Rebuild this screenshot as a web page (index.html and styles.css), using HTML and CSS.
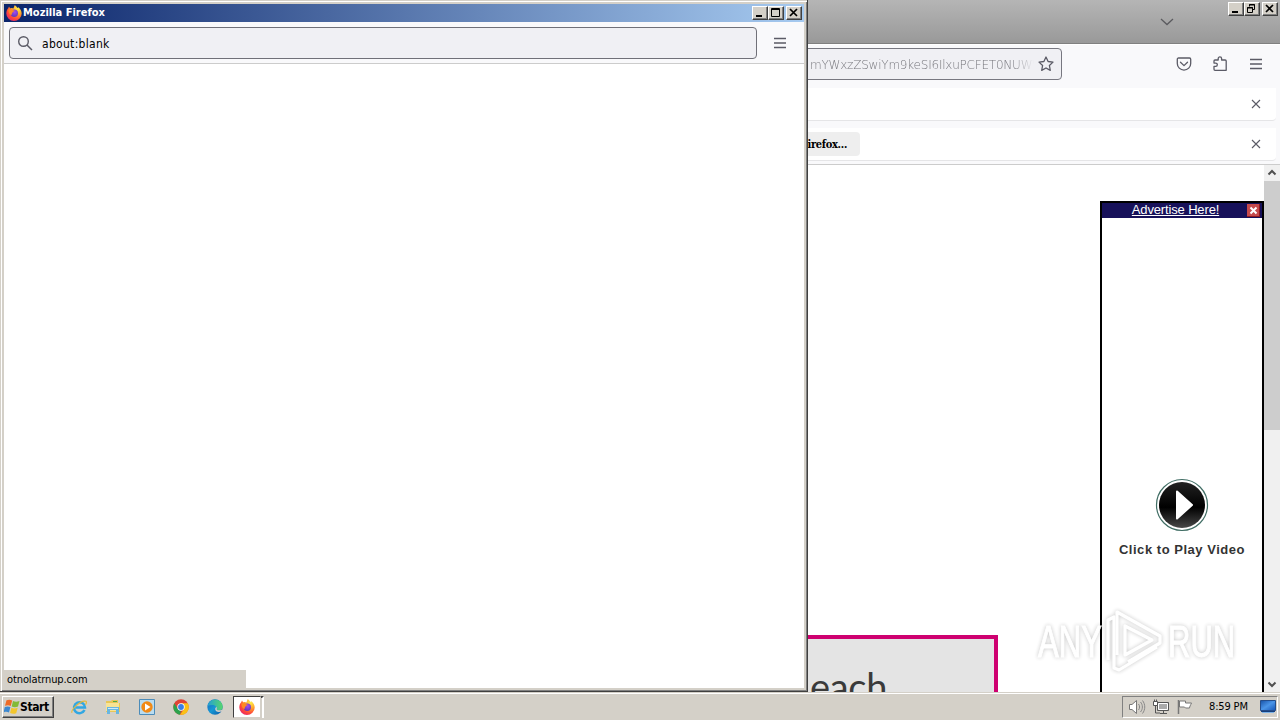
FILE: index.html
```html
<!DOCTYPE html>
<html lang="en">
<head>
<meta charset="utf-8">
<title>Desktop</title>
<link rel="stylesheet" href="styles.css">
</head>
<body>
<svg width="0" height="0" class="defs">
  <defs>
    <radialGradient id="fxo" cx=".75" cy=".2" r=".95"><stop offset="0" stop-color="#fff04a"/><stop offset=".4" stop-color="#ffa22a"/><stop offset=".72" stop-color="#ff4a38"/><stop offset="1" stop-color="#e52070"/></radialGradient>
    <radialGradient id="fxp" cx=".55" cy=".35" r=".7"><stop offset="0" stop-color="#a24cf0"/><stop offset="1" stop-color="#5b35b5"/></radialGradient>
    <linearGradient id="edge" x1="0" y1="0" x2="1" y2="1"><stop offset="0" stop-color="#1b62bd"/><stop offset=".5" stop-color="#1697d4"/><stop offset="1" stop-color="#0d58a6"/></linearGradient>
    <linearGradient id="edgeg"><stop offset="0" stop-color="#239fd6"/><stop offset="1" stop-color="#58d66b"/></linearGradient>
    <linearGradient id="ball" x1="0" y1="0" x2="0" y2="1"><stop offset="0" stop-color="#222"/><stop offset=".55" stop-color="#000"/><stop offset="1" stop-color="#494949"/></linearGradient>
    <linearGradient id="scr" x1="0" y1="0" x2="1" y2="1"><stop offset="0" stop-color="#1651a8"/><stop offset=".5" stop-color="#4b95e8"/><stop offset="1" stop-color="#1554b5"/></linearGradient>
    <symbol id="firefox" viewBox="0 0 16 16">
      <path fill="url(#fxo)" d="M2.2 3.2 3 1.6l1.1 1.7L5.8 3l1.6.5L8.6.2c1.6.7 2.2 1.8 2.7 2.8l1-.8c2 1.5 3.4 3.7 3.4 6.3A7.7 7.4 0 0 1 .3 8.5C.3 6.400 1 4.500 2.200 3.200z"/>
      <circle cx="8.300" cy="8.300" r="3.700" fill="url(#fxp)"/>
      <path fill="#ff8a22" d="M2.500 4.700C4 3.600 5.700 4 6.900 5.200l1.800.2c-.2.9-1.300 1.200-1.900 1.500-.3 1.300-1.600 1.800-1 3C3.500 9.700 2.500 7 2.500 4.700z"/>
    </symbol>
    <symbol id="menu" viewBox="0 0 16 16"><path d="M2 3.500h12M2 8h12M2 12.500h12" fill="none" stroke="#5b5b66" stroke-width="1.300"/></symbol>
    <symbol id="cross" viewBox="0 0 10 10"><path d="m1 1 8 8M9 1 1 9" fill="none" stroke="#5b5b66" stroke-width="1.100"/></symbol>
    <symbol id="min" viewBox="0 0 14 12"><path fill="#000" d="M3 8h6v2H3z"/></symbol>
    <symbol id="max" viewBox="0 0 14 12"><path fill="none" stroke="#000" d="M2.500 1.500h8v8h-8zM2 2.500h9"/></symbol>
    <symbol id="rest" viewBox="0 0 14 12"><path fill="none" stroke="#000" d="M4.500 3.500v-2h5v5h-2M4 2h6M2.500 4.500h5v5h-5zM2 5h6"/></symbol>
    <symbol id="shut" viewBox="0 0 14 12"><path fill="none" stroke="#000" stroke-width="1.700" d="m3 2 7 7m0-7-7 7"/></symbol>
  </defs>
</svg>
<div class="desktop">
  <main class="browser">
    <header class="tabstrip">
      <svg class="tabs-arrow" viewBox="0 0 14 8"><path d="m1 1 6 5.500L13 1" fill="none" stroke="#5b5b5f" stroke-width="1.300"/></svg>
      <div class="controls"><b><svg><use href="#min"/></svg></b><b><svg><use href="#rest"/></svg></b><b class="last"><svg><use href="#shut"/></svg></b></div>
    </header>
    <div class="toolbar">
      <div class="address"><span class="long-url">mYWxzZSwiYm9keSI6IlxuPCFET0NUWV</span>
        <svg class="star" viewBox="0 0 16 16"><path d="m8 1 2.100 4.500 4.900.6-3.600 3.400.9 4.900L8 12l-4.300 2.400.9-4.900L1 6.100l4.900-.6z" fill="none" stroke="#5b5b66" stroke-width="1.300" stroke-linejoin="round"/></svg>
      </div>
      <div class="tools">
        <svg viewBox="0 0 16 16"><path d="M2.500 2h11c.7 0 1.200.5 1.200 1.200v4.200a6.700 6.700 0 0 1-13.400 0V3.200C1.300 2.500 1.800 2 2.500 2zM4.500 6.300 8 9.600l3.500-3.300" fill="none" stroke="#5b5b66" stroke-width="1.300" stroke-linecap="round" stroke-linejoin="round"/></svg>
        <svg viewBox="0 0 16 16"><path d="M6.200 4V2.600a1.700 1.700 0 0 1 3.400 0V4h3.600c.6 0 1 .4 1 1v9.300H3c-.6 0-1-.4-1-1v-3h1.700a1.600 1.600 0 0 0 0-3.200H2V5c0-.6.400-1 1-1z" fill="none" stroke="#5b5b66" stroke-width="1.300" stroke-linejoin="round"/></svg>
        <svg><use href="#menu"/></svg>
      </div>
    </div>
    <div class="notices">
      <div class="notice"><svg><use href="#cross"/></svg></div>
      <div class="notice"><span class="refresh">irefox…</span><svg><use href="#cross"/></svg></div>
    </div>
    <div class="viewport">
      <div class="page">
        <section class="promo"><span>each</span></section>
        <aside class="ad">
          <div class="ad-head"><span class="ad-link">Advertise Here!</span>
            <svg class="ad-close" viewBox="0 0 13 13"><path fill="#c64a4c" d="M0 0h13v13H0z"/><path fill="#8f181f" d="M0 12h13v1H0zM12 0h1v13h-1z"/><path d="m3.500 3.500 6 6m0-6-6 6" stroke="#fff" stroke-width="2"/></svg>
          </div>
          <div class="ad-body">
            <svg class="play" viewBox="0 0 54 54"><circle cx="27" cy="27" r="25.500" fill="#fff" stroke="#416e65" stroke-width="1.200"/><circle cx="27" cy="27" r="23" fill="url(#ball)"/><path d="M22 13.500 37 27 22 40.500z" fill="#fff" stroke="#fff" stroke-width="2" stroke-linejoin="round"/></svg>
            <div class="ad-text">Click to Play Video</div>
          </div>
        </aside>
      </div>
      <div class="scrollbar">
        <svg viewBox="0 0 16 16"><path d="m4.500 9.500 3.500-3.500 3.500 3.500" fill="none" stroke="#505050" stroke-width="2"/></svg>
        <div class="thumb"></div>
        <svg class="down" viewBox="0 0 16 16"><path d="m4.500 6.500 3.500 3.500 3.500-3.500" fill="none" stroke="#505050" stroke-width="2"/></svg>
      </div>
    </div>
  </main>

  <div class="watermark">
    <span class="wm any">ANY</span>
    <svg viewBox="0 0 60 66"><g fill="none" stroke="#fff" stroke-width="3.200" stroke-linejoin="round"><path d="M13 47V4l43 24v7L24 54"/><path d="M4 52V12l6-3v51l5 2 38-23"/><path d="M21 18v29l27-15z"/></g></svg>
    <span class="wm run">RUN</span>
  </div>

  <section class="popup">
    <div class="titlebar"><svg class="fx"><use href="#firefox"/></svg><strong>Mozilla Firefox</strong>
      <div class="controls"><b><svg><use href="#min"/></svg></b><b><svg><use href="#max"/></svg></b><b class="last"><svg><use href="#shut"/></svg></b></div>
    </div>
    <div class="popup-bar">
      <div class="field"><svg viewBox="0 0 16 16"><circle cx="6.500" cy="6.500" r="4.800" fill="none" stroke="#5b5b66" stroke-width="1.400"/><path d="m10 10 5 5" stroke="#5b5b66" stroke-width="1.500"/></svg><span>about:blank</span></div>
      <svg class="popup-menu"><use href="#menu"/></svg>
    </div>
    <div class="blank"><div class="status"><span>otnolatrnup.com</span></div></div>
  </section>

  <footer class="taskbar">
    <div class="start">
      <svg viewBox="0 0 16 16"><path fill="#ed6b28" d="M2.500 1.300c2.300-1 3.700-.8 5.700.1L6.700 7C5 6 3.300 6 1 6.800z"/><path fill="#83ba37" d="M9 2c2.200 1 4 1 6.500 0L14 7.500c-2.300 1-4.300.8-6.300 0z"/><path fill="#3c88d0" d="M.8 8c2.200-.9 3.900-.7 5.600.1L5 13.500c-1.900-1-3.600-1-5.600 0z"/><path fill="#f3c62c" d="M7.400 8.700c2.200 1 4 1 6.300 0l-1.500 5.500c-2.200.9-4.300.7-6.100-.2z"/></svg><span>Start</span>
    </div>
    <div class="quick">
      <svg viewBox="0 0 16 16"><path d="M13.500 11A5.500 5.500 0 1 1 14 8.500H4.500" fill="none" stroke="#32a7e2" stroke-width="2.500"/><path d="M1 13.800C-.5 11 10 .5 15 2.300c1 .8.200 2.300-.5 3.500" fill="none" stroke="#e5b93b" stroke-width="1.200"/></svg>
      <svg viewBox="0 0 16 16"><path fill="#e8c657" d="M1 2h5l1-1h6v3h2v9H1z"/><path fill="#f8e394" d="M1 4h13v8H1z"/><path fill="#52a848" d="M8 2h4v1H8z"/><path fill="#69b6e1" d="M2 8h12v7h-3v-4H5v4H2z"/><path fill="#cceafa" d="M3 9h10v1H3z"/></svg>
      <svg viewBox="0 0 16 16"><path fill="#b9dcf0" stroke="#4c8cb9" d="M.5.500h15v15H.5z"/><circle cx="8" cy="8" r="5.700" fill="#f18a16"/><path fill="#fff" d="m6 4.500 5.500 3.500L6 11.500z"/></svg>
      <svg viewBox="0 0 16 16"><circle cx="8" cy="8" r="7.700" fill="#df4436"/><path fill="#2ba24c" d="M1.300 4.200 5 10l3 1.500-1.200 4.200A7.800 7.800 0 0 1 1.300 4.200z"/><path fill="#fbc116" d="M8 4.300h6.800A7.700 7.700 0 0 1 7 15.700L11 10z"/><circle cx="8" cy="8" r="3.700" fill="#fff"/><circle cx="8" cy="8" r="2.900" fill="#397fe6"/></svg>
      <svg viewBox="0 0 16 16"><circle cx="8" cy="8" r="7.700" fill="url(#edge)"/><path fill="url(#edgeg)" d="M.4 7A7.700 7.700 0 0 1 15.700 8c0 2.500-2 3.400-4 3.400-1.700 0-2.700-.7-2-1.600C10.500 7 6.500 4.500.4 7z"/><path fill="#d6d0c8" d="M9.800 9.800c-1 1.500 2.200 2.200 5.700.7l-.8 1.800c-3.200 1.700-6.500.2-6.500-2.300 0-1 .8-1.800 1.400-2.200z"/></svg>
      <div class="active"><svg><use href="#firefox"/></svg></div><i class="stack"></i>
    </div>
    <div class="tray">
      <svg viewBox="0 0 18 16"><path fill="#fff" stroke="#777" d="M1.500 5.500H4L8.500 1.500v13L4 10.500H1.500z"/><path d="M10.500 5c1.500 2 1.500 4 0 6M12.500 3c2.500 3 2.500 7 0 10M14.500 1.500c3 4 3 9 0 13" fill="none" stroke="#888"/></svg>
      <svg viewBox="0 0 18 16"><path fill="#aaa" stroke="#555" d="M5.500 3.500h11v8h-11z"/><path fill="none" stroke="#fff" d="M6.500 4.500h9v6h-9z"/><path stroke="#555" d="M8 14.500h7M11.500 12v3M3.500 7v7H8" fill="none"/><path fill="#fff" stroke="#555" d="M1.500 2.500h4v4h-4zM2.500.5v2M4.500.5v2"/></svg>
      <svg viewBox="0 0 18 16"><path stroke="#777" stroke-width="1.500" d="M2.500 1v14"/><path fill="#fff" stroke="#777" d="M3.500 2h6v2h6c-1 2-2 4-2 5h-4l-1-1h-5z"/></svg>
      <time>8:59 PM</time>
      <svg class="desk" viewBox="0 0 16 14"><path fill="url(#scr)" stroke="#254d8a" d="M.5.500h15v10H.5z"/><path fill="#153f7d" d="M1 11h14v1H1z"/><path fill="#7db3e8" d="M2 12h12v1H2z"/></svg>
    </div>
  </footer>
</div>
</body>
</html>
```
FILE: styles.css
```css
* { box-sizing: border-box; }
body { margin: 0; font-family: "DejaVu Sans Condensed", "DejaVu Sans", sans-serif; font-size: 11px; color: #000; }
svg { display: block; flex: none; width: 16px; height: 16px; }
.defs { position: absolute; width: 0; height: 0; }
.desktop { position: relative; width: 1280px; height: 720px; overflow: hidden; background: #d4d0c8; display: flex; flex-direction: column; }
.browser { height: 692px; display: flex; flex-direction: column; background: #fff; }
.tabstrip { height: 44px; flex: none; display: flex; justify-content: flex-end; border-bottom: 1px solid #808080; background: linear-gradient(#b5b5b5, #999); }
.tabs-arrow { width: 14px; height: 8px; margin: 18px 54px 0 0; }
.tabstrip .controls { margin: 2px 2px 0 0; }
.controls { display: flex; height: 14px; }
.controls b { width: 16px; height: 14px; background: #d4d0c8; border: 1px solid; border-color: #fff #404040 #404040 #fff; box-shadow: inset -1px -1px #808080; }
.controls b.last { margin-left: 2px; }
.controls svg { width: 14px; height: 12px; }
.toolbar { height: 44px; flex: none; background: #f9f9fb; display: flex; padding: 4px 16px 0 0; border-top: 1px solid #fff; }
.address { width: 1062px; height: 32px; margin-top: -1px; background: #f0f0f4; border: 1px solid #777780; border-radius: 4px; display: flex; justify-content: flex-end; align-items: center; padding-right: 7px; }
.long-url { width: 224px; overflow: hidden; white-space: nowrap; color: #77777d; font: 200 12px/18px "DejaVu Sans Light", "DejaVu Sans", sans-serif; letter-spacing: -.22px; margin: 2px 4px 0 0; -webkit-mask-image: linear-gradient(90deg, #000 90%, transparent); mask-image: linear-gradient(90deg, #000 90%, transparent); }
.tools { margin-left: auto; height: 30px; display: flex; align-items: center; gap: 20px; }
.notices { height: 77px; flex: none; background: #f9f9fb; border-bottom: 1px solid #ccc; padding-right: 4px; display: flex; flex-direction: column; gap: 7px; }
.notice { height: 33px; background: #fff; border-bottom: 1px solid #e5e5e7; border-radius: 0 0 4px 0; display: flex; align-items: center; justify-content: flex-end; padding-right: 15px; }
.notice svg { width: 10px; height: 10px; }
.refresh { width: 120px; height: 24px; margin-right: 391px; padding-right: 13px; text-align: right; font: bold 11px/25px "DejaVu Serif Condensed", "DejaVu Serif", serif; letter-spacing: -.35px; background: #eee; border-radius: 4px; white-space: nowrap; }
.viewport { flex: 1; min-height: 0; display: flex; }
.page { flex: 1; display: flex; padding-top: 36px; align-items: flex-start; overflow: hidden; }
.promo { width: 998px; height: 180px; margin-top: 434px; border: 4px solid #ce0070; background: #e4e4e4; padding: 27px 0 0 806px; font: 38px/40px Lato, sans-serif; color: #3a3a3a; letter-spacing: -.3px; }
.ad { width: 164px; height: 510px; margin-left: 102px; border: 2px solid #000; background: #fff; }
.ad-head { height: 15px; background: #17115a; display: flex; padding: 0 2px 0 0; align-items: center; }
.ad-link { flex: 1; text-align: center; padding-left: 2px; color: #fff; font: 13px/14px "Liberation Sans", sans-serif; letter-spacing: -.15px; text-decoration: underline; margin-top: -2px; }
.ad-close { width: 13px; height: 13px; margin-top: -1px; }
.ad-body { padding-top: 260px; display: flex; flex-direction: column; align-items: center; }
.play { width: 54px; height: 54px; }
.ad-text { margin-top: 9px; font: bold 13px/17px "Liberation Sans", sans-serif; letter-spacing: .53px; color: #333; white-space: nowrap; }
.scrollbar { width: 16px; background: #f0f0f0; display: flex; flex-direction: column; }
.thumb { height: 249px; background: #cdcdcd; }
.down { margin-top: auto; }
.watermark { position: absolute; left: 1038px; top: 607px; width: 200px; height: 68px; display: flex; align-items: center; filter: drop-shadow(0 0 2px rgba(0,0,0,.25)); opacity: .9; }
.watermark > svg { width: 60px; height: 66px; }
.wm { font: 45px/60px "Liberation Sans", sans-serif; color: #fff; -webkit-text-stroke: 1px #fff; transform-origin: left; transform: scaleX(.69); height: 58px; }
.any { width: 66px; }
.run { width: 64px; margin-left: 4px; }
.popup { position: absolute; left: 0; top: 0; width: 808px; height: 692px; padding: 4px 3px 3px 4px; display: flex; flex-direction: column; background: #d4d0c8; border-right: 1px solid #404040; border-bottom: 1px solid #404040; box-shadow: inset 1px 1px #d4d0c8, inset 2px 2px #fff, inset -1px -1px #808080; }
.titlebar { height: 18px; flex: none; display: flex; align-items: center; background: linear-gradient(90deg, #0a246a, #a6caf0); color: #fff; padding: 0 2px; }
.titlebar strong { font: bold 11px/18px "DejaVu Sans Condensed", sans-serif; margin-left: 1px; }
.titlebar .controls { margin-left: auto; }
.popup-bar { height: 42px; flex: none; background: #f9f9fb; border-bottom: 1px solid #ccc; padding: 5px 16px 4px 5px; display: flex; align-items: center; }
.field { width: 748px; height: 32px; background: #f0f0f4; border: 1px solid #707078; border-radius: 4px; display: flex; align-items: center; padding-left: 7px; }
.field span { margin: 1px 0 0 9px; font: 12px "DejaVu Sans Condensed", sans-serif; letter-spacing: .3px; }
.popup-menu { margin-left: auto; }
.blank { flex: 1; background: #fff; display: flex; align-items: flex-end; }
.status { width: 242px; height: 18px; background: #d4d0c8; padding-left: 3px; line-height: 20px; letter-spacing: -.1px; }
.taskbar { height: 28px; display: flex; align-items: center; padding: 2px 2px 2px; border-top: 1px solid #d4d0c8; box-shadow: inset 0 1px #fff; }
.start { width: 52px; height: 22px; border: 1px solid; border-color: #fff #404040 #404040 #fff; box-shadow: inset -1px -1px #808080; display: flex; align-items: center; padding-left: 1px; font: bold 12px "DejaVu Sans Condensed", sans-serif; letter-spacing: -.4px; }
.quick { display: flex; align-items: center; gap: 18px; margin-left: 17px; }
.active { width: 28px; height: 22px; margin-left: -8px; background: #fff; border: 1px solid; border-color: #404040 #d4d0c8 #d4d0c8 #404040; padding: 2px 0 0 5px; }
.stack { width: 3px; height: 22px; margin-left: -18px; border-top: 2px solid #404040; border-right: 2px solid #fff; }
.tray { margin-left: auto; width: 156px; height: 22px; border: 1px solid; border-color: #808080 #fff #fff #808080; display: flex; align-items: center; padding-left: 5px; }
.tray > svg { width: 18px; margin-right: 6px; }
.tray time { margin-left: 9px; white-space: nowrap; letter-spacing: -.15px; }
.tray > .desk { width: 16px; height: 14px; margin: 0 1px 0 auto; }
```
